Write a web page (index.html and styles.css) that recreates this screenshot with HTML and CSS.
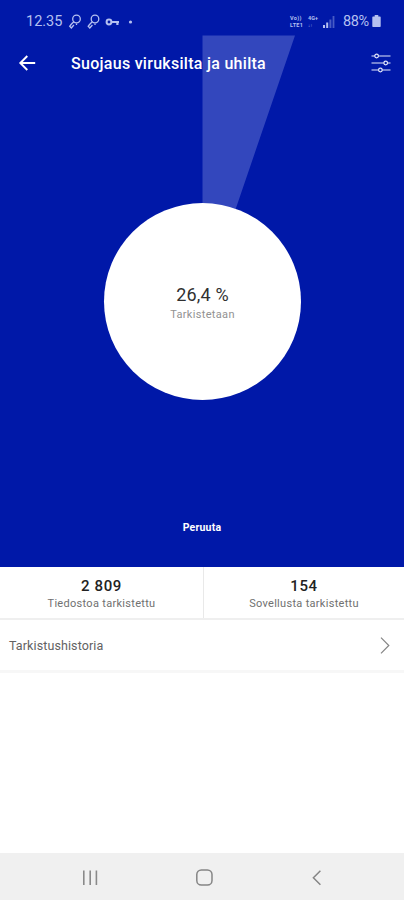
FILE: index.html
```html
<!DOCTYPE html>
<html lang="fi">
<head>
<meta charset="utf-8">
<meta name="viewport" content="width=device-width, initial-scale=1">
<title>Suojaus viruksilta ja uhilta</title>
<link rel="stylesheet" href="styles.css">
</head>
<body>
<main class="screen">
  <section class="hero">
    <svg class="sweep" viewBox="0 0 404 566" aria-hidden="true"><path d="M202.5 35.5H295L236 208V301H202.5Z"/></svg>
    <div class="status">
      <span class="clock">12.35</span>
      <svg class="notices" width="68" height="18" viewBox="0 0 68 18" fill="none" stroke="currentColor">
        <g id="finder" stroke-width="1.3"><circle cx="8.5" cy="6" r="3.8"/><path d="M5.8 8.7L2.5 12M4.3 10.2L1.7 13.3L3.3 15L5.9 12M8.5 10.5V12"/></g>
        <use href="#finder" x="18.5"/>
        <circle cx="41" cy="9" r="2.4" stroke-width="2"/><path d="M44 9H51M49.4 9V12" stroke-width="2.2"/>
        <circle cx="62.5" cy="9" r="1.6" fill="currentColor" stroke="none"/>
      </svg>
      <div class="network">
        <span class="stack volte"><span>Vo))</span><span>LTE1</span></span>
        <span class="stack data"><span>4G+</span><span class="arrows">↓↑</span></span>
        <svg width="12" height="12" viewBox="0 0 12 12" fill="currentColor"><path d="M0 9H2V12H0ZM3.2 6.5H5.2V12H3.2Z"/><path opacity=".4" d="M6.4 3.5H8.4V12H6.4ZM9.6 0H11.4V12H9.6Z"/></svg>
      </div>
      <span class="percent">88%</span>
      <svg class="battery" width="9" height="13" viewBox="0 0 9 13" fill="currentColor"><path d="M2.7 0H6.3V1.5H8Q8.7 1.5 8.7 2.2V11.3Q8.7 12 8 12H1Q.3 12 .3 11.3V2.2Q.3 1.5 1 1.5H2.7Z"/></svg>
    </div>
    <header class="appbar">
      <svg width="18" height="18" viewBox="0 0 18 18" fill="none" stroke="#fff" stroke-width="1.9"><path d="M17.2 9H2.8M9.3 2L2.3 9L9.3 16"/></svg>
      <h1>Suojaus viruksilta ja uhilta</h1>
      <svg class="settings" width="20" height="22" viewBox="0 0 20 22" fill="#0018a8" stroke="#e4e8fa" stroke-width="1.2"><path d="M.5 4H19.5M.5 11H19.5M.5 18H19.5"/><circle cx="5.6" cy="4" r="1.8"/><circle cx="14.7" cy="11" r="1.8"/><circle cx="9.4" cy="18" r="1.8"/></svg>
    </header>
    <div class="progress">
      <div class="value">26,4 %</div>
      <div class="state">Tarkistetaan</div>
    </div>
    <button class="cancel" type="button">Peruuta</button>
  </section>
  <section class="stats">
    <div class="stat"><strong>2 809</strong><span>Tiedostoa tarkistettu</span></div>
    <div class="stat"><strong>154</strong><span>Sovellusta tarkistettu</span></div>
  </section>
  <div class="history">
    <span>Tarkistushistoria</span>
    <svg width="10" height="18" viewBox="0 0 10 18" fill="none" stroke="#858585" stroke-width="1.2"><path d="M1 1.7L8.8 9.5L1 17.3"/></svg>
  </div>
  <nav class="navbar">
    <svg width="16" height="16" viewBox="0 0 16 16" fill="none" stroke="#8a8a8a" stroke-width="1.6"><path d="M1.8 .5V15M8.2 .5V15M14.4 .5V15"/></svg>
    <svg width="18" height="18" viewBox="0 0 18 18" fill="none" stroke="#858585" stroke-width="1.5"><rect x=".8" y=".9" width="15.2" height="15.2" rx="4.6"/></svg>
    <svg width="10" height="16" viewBox="0 0 10 16" fill="none" stroke="#858585" stroke-width="1.5"><path d="M8.4 .8L1.4 7.8L8.4 14.8"/></svg>
  </nav>
</main>
</body>
</html>
```
FILE: styles.css
```css
* { box-sizing: border-box; }
body { margin: 0; background: #fff; font-family: Roboto, sans-serif; }
svg { display: block; flex: none; }
.screen { width: 404px; height: 900px; display: flex; flex-direction: column; }
.hero {
  position: relative;
  height: 567px;
  flex: none;
  display: flex;
  flex-direction: column;
  align-items: center;
  background: #0018a8;
  color: #fff;
}
.sweep { position: absolute; top: 0; left: 0; width: 404px; height: 566px; }
.sweep path { fill: #3347bd; }
.status {
  position: relative;
  width: 100%;
  height: 36px;
  padding: 7px 23px 0 26px;
  display: flex;
  align-items: center;
  color: #b5c0f0;
}
.clock { width: 42px; font-size: 14.5px; letter-spacing: 0; }
.network { display: flex; align-items: center; gap: 3px; margin-left: auto; margin-right: 8px; }
.stack { display: flex; flex-direction: column; font-size: 5.5px; line-height: 7px; font-weight: 700; }
.volte { width: 15px; letter-spacing: .3px; }
.data { width: 12px; }
.arrows { font-size: 4.5px; }
.percent { font-size: 14.5px; width: 28px; letter-spacing: -.4px; }
.battery { margin-left: 1px; }
.appbar {
  position: relative;
  width: 100%;
  height: 54px;
  padding: 0 13px 0 18px;
  display: flex;
  align-items: center;
}
.appbar h1 { margin: 2px 0 0 35px; font-size: 16px; line-height: 20px; font-weight: 500; letter-spacing: .28px; white-space: nowrap; }
.settings { margin-left: auto; }
.progress {
  position: relative;
  width: 197px;
  height: 197px;
  margin-top: 112.5px;
  margin-left: 1px;
  padding-top: 81px;
  border-radius: 50%;
  background: #fff;
  text-align: center;
}
.value { font-size: 18px; line-height: 22px; color: #303030; letter-spacing: .2px; }
.state { margin-top: 1px; font-size: 11px; line-height: 16px; color: #929292; letter-spacing: .33px; }
.cancel {
  margin-top: 120px;
  padding: 0;
  border: 0;
  background: none;
  color: #fff;
  font: 700 10.5px/16px Roboto, sans-serif;
  letter-spacing: .2px;
}
.stats { height: 53px; flex: none; display: grid; grid-template-columns: 203px 1fr; border-bottom: 2px solid #efefef; }
.stat { display: flex; flex-direction: column; align-items: center; padding-top: 10px; }
.stat + .stat { border-left: 1px solid #e9e9e9; }
.stat strong { font-size: 15px; line-height: 18px; font-weight: 500; color: #222; letter-spacing: .6px; }
.stat span { font-size: 11px; line-height: 16px; color: #707070; letter-spacing: .3px; margin-top: 1px; }
.history {
  height: 53px;
  flex: none;
  padding: 0 14px 0 9px;
  display: flex;
  align-items: center;
  justify-content: space-between;
  border-bottom: 3px solid #f7f7f7;
  color: #626262;
  font-size: 12.5px;
  letter-spacing: .1px;
}
.navbar {
  height: 47px;
  margin-top: auto;
  padding: 2px 82px 0;
  display: flex;
  align-items: center;
  justify-content: space-between;
  background: #f0f0f0;
}
```
